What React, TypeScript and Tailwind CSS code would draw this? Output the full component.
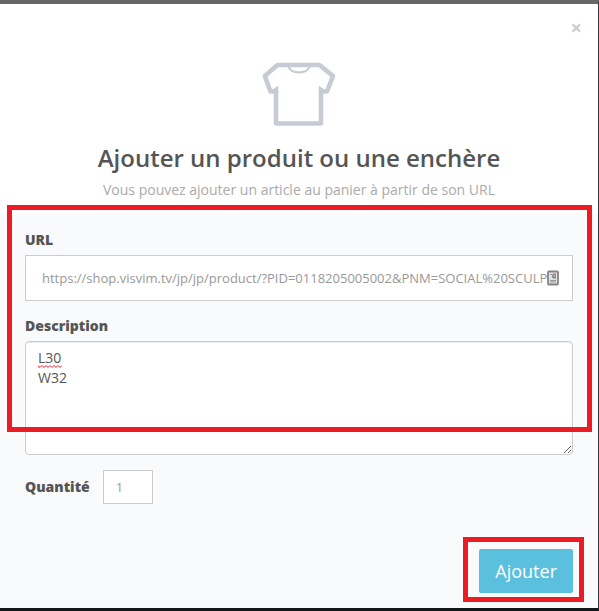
import { useState } from "react";

const ShirtIcon = () => (
  <svg
    className="h-[64px] w-[74px]"
    viewBox="0 0 74 64"
    fill="none"
    stroke="#c7ccd4"
    strokeLinejoin="round"
    aria-hidden="true"
  >
    <path
      d="M15.500 3 H57.500 L71 14 L65 29.500 H59 V61.500 H14 V29.500 H8.500 L2.800 14 Z"
      strokeWidth="4.600"
    />
    <path
      d="M16.300 23.500 L10 28 V31 H16.300 Z M56.700 23.500 L63 28 V31 H56.700 Z"
      fill="#c7ccd4"
      stroke="none"
    />
    <path d="M26 4 C29 12.500 45 12.500 48 4" strokeWidth="2.200" />
  </svg>
);

const FillIcon = () => (
  <svg
    className="h-[16px] w-[12px]"
    viewBox="0 0 12 16"
    fill="none"
    aria-hidden="true"
  >
    <rect
      x="1"
      y="1.500"
      width="10"
      height="13"
      rx="0.800"
      fill="#e2e2e2"
      stroke="#858585"
      strokeWidth="1.800"
    />
    <path d="M3 4.500 H5.500 V8 M3 10.500 H9 M3 12 H9" stroke="#999" />
    <path d="M6 3.500 H9 V8.500 H6 Z" fill="#8c8c8c" />
    <path d="M7 5.500 H8" stroke="#ddd" />
  </svg>
);

const Squiggle = () => (
  <svg
    className="pointer-events-none absolute top-[24px] left-[13px] h-[3px] w-[24px]"
    viewBox="0 0 24 3"
    fill="none"
    aria-hidden="true"
  >
    <path
      d="M0 1 L2 2.500 L4 0.500 L6 2.500 L8 0.500 L10 2.500 L12 0.500 L14 2.500 L16 0.500 L18 2.500 L20 0.500 L22 2.500 L24 0.500"
      stroke="#e8202a"
    />
  </svg>
);

const App = () => {
  const [url, setUrl] = useState(
    "https://shop.visvim.tv/jp/jp/product/?PID=0118205005002&PNM=SOCIAL%20SCULPT"
  );
  const [description, setDescription] = useState("L30\nW32");
  const [quantity, setQuantity] = useState("1");

  return (
    <div className="flex min-h-screen flex-col border-t-4 border-r border-b-3 border-t-[#666] border-r-[#30383f] border-b-[#15161a] bg-[#f9fafc] font-['Open_Sans',sans-serif] text-sm text-[#555]">
      <header className="relative flex flex-col items-center bg-white pt-[58px] pb-[14px] text-center">
        <button
          type="button"
          aria-label="Fermer"
          className="absolute top-3 right-4 text-xl leading-6 font-bold text-[#ccc]"
        >
          ×
        </button>
        <ShirtIcon />
        <h1 className="mt-4 text-2xl leading-8 font-semibold">
          Ajouter un produit ou une enchère
        </h1>
        <p className="mt-[6px] leading-5 text-[#aaa]">
          Vous pouvez ajouter un article au panier à partir de son URL
        </p>
      </header>

      <form
        className="flex grow flex-col px-[25px] pt-4 pb-[15px]"
        onSubmit={(e) => e.preventDefault()}
      >
        <div className="relative">
          <label htmlFor="url" className="block leading-5 font-extrabold">
            URL
          </label>
          <div className="relative mt-[5px]">
            <input
              id="url"
              type="text"
              value={url}
              onChange={(e) => setUrl(e.target.value)}
              className="block h-[46px] w-full border border-[#ccc] bg-white pr-3 pl-4 text-[13px] text-[#999] outline-none"
            />
            <span className="absolute top-[15px] right-[14px]">
              <FillIcon />
            </span>
          </div>

          <label
            htmlFor="description"
            className="mt-[15px] block leading-5 font-extrabold"
          >
            Description
          </label>
          <div className="relative mt-[5px]">
            <textarea
              id="description"
              spellCheck={false}
              value={description}
              onChange={(e) => setDescription(e.target.value)}
              className="block h-[114px] w-full rounded border border-[#ccc] bg-white px-3 py-1.5 leading-5 shadow-[inset_0_1px_1px_rgba(0,0,0,0.075)] outline-none"
            />
            <Squiggle />
          </div>
          <div className="pointer-events-none absolute -top-[25px] -right-[19px] bottom-[23px] -left-[18px] border-5 border-[#ed1c24]" />
        </div>

        <div className="mt-[15px] flex items-center gap-[13px]">
          <label htmlFor="quantity" className="font-extrabold">
            Quantité
          </label>
          <input
            id="quantity"
            type="text"
            value={quantity}
            onChange={(e) => setQuantity(e.target.value)}
            className="h-[34px] w-[50px] border border-[#ccc] bg-white px-3 text-[13px] text-[#999] outline-none"
          />
        </div>

        <div className="mt-auto flex justify-end">
          <div className="relative">
            <button
              type="submit"
              className="block h-[44px] rounded-xs bg-[#5bc0de] px-4 text-lg text-white"
            >
              Ajouter
            </button>
            <div className="pointer-events-none absolute -top-3 -right-[11px] -bottom-[9px] -left-4 border-5 border-[#ed1c24]" />
          </div>
        </div>
      </form>
    </div>
  );
};

export default App;
